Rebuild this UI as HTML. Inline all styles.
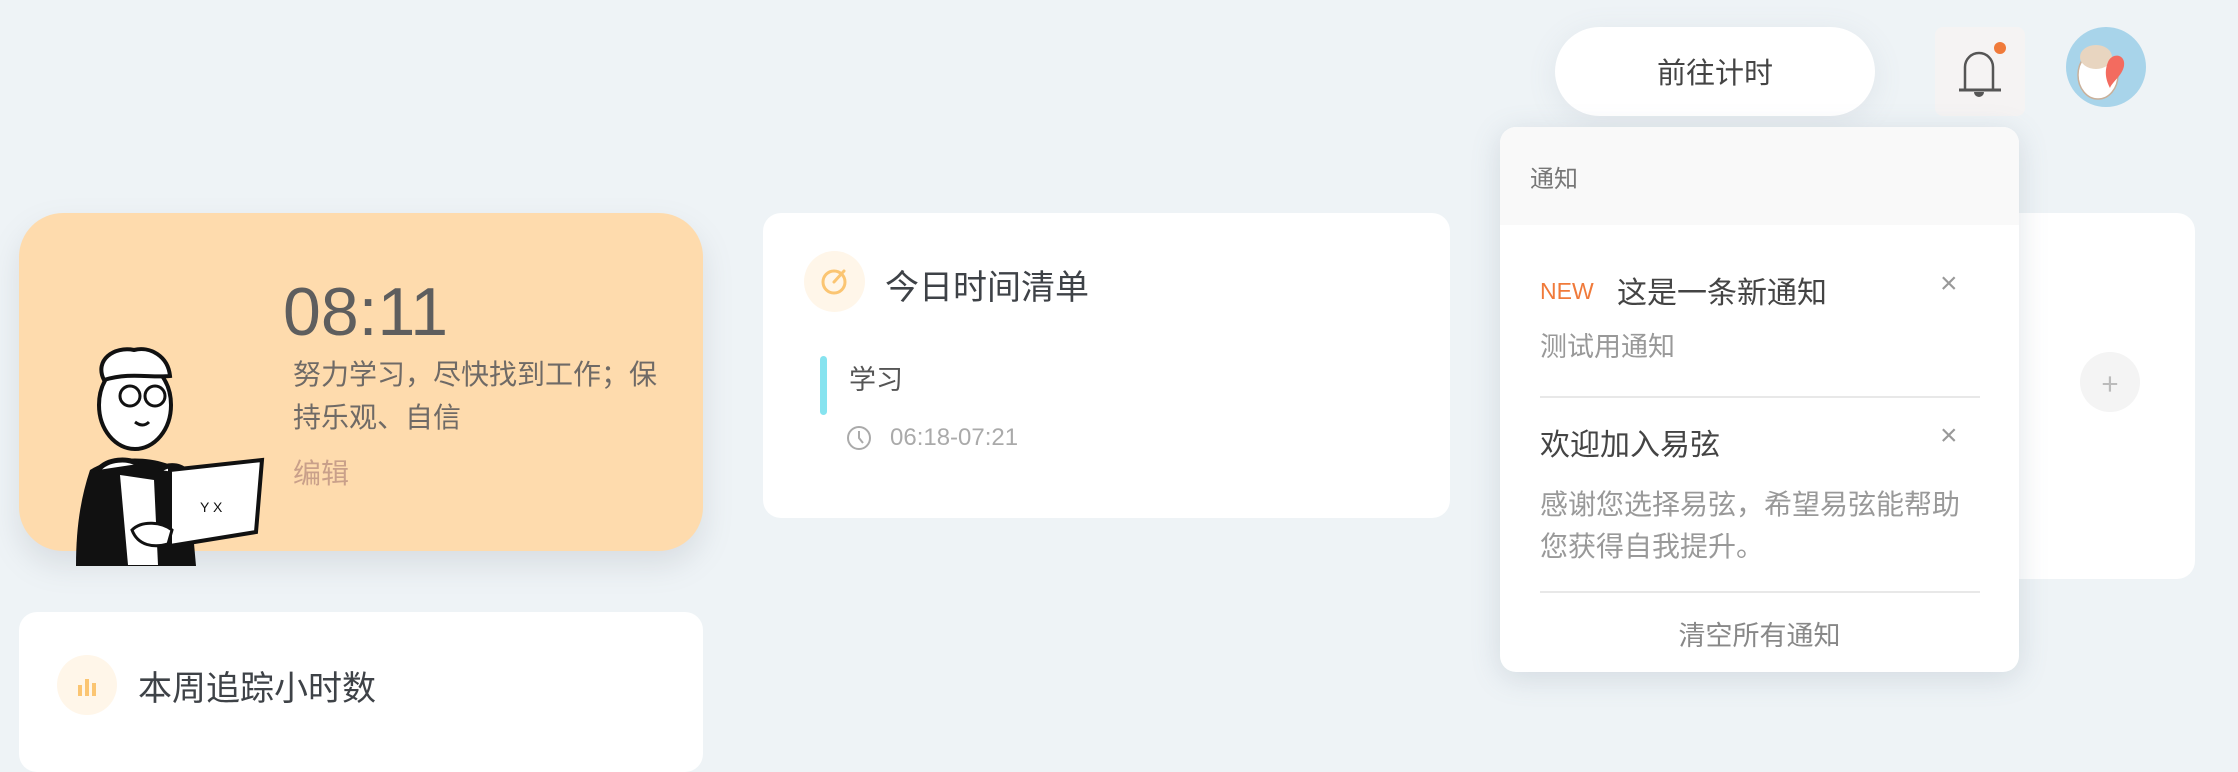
<!DOCTYPE html>
<html><head><meta charset="utf-8"><style>
*{margin:0;padding:0;box-sizing:border-box}
body{width:2238px;height:746px;background:#eef3f6;font-family:"Noto Sans CJK SC","Liberation Sans",sans-serif;position:relative;overflow:hidden;color:#333}
.a{position:absolute}
.card{position:absolute;background:#fff;border-radius:18px}
.lat{font-family:"Liberation Sans",sans-serif}
</style></head><body>
<!-- header -->
<div class="a" style="left:1555px;top:27px;width:320px;height:89px;border-radius:45px;background:#fff;box-shadow:0 6px 30px rgba(120,140,160,.12);font-size:29px;color:#444;text-align:center;line-height:89px">前往计时</div>
<div class="a" style="left:1935px;top:27px;width:90px;height:89px;border-radius:8px;background:#f5f3f3">
<svg width="90" height="89" viewBox="0 0 90 89"><path d="M30 62 V40 a14 14 0 0 1 28 0 V62" fill="none" stroke="#555" stroke-width="2.5"/><line x1="24" y1="63" x2="66" y2="63" stroke="#555" stroke-width="3"/><path d="M39 65 a5 5 0 0 0 10 0z" fill="#555"/><circle cx="65" cy="21" r="6" fill="#f07a3a"/></svg></div>
<div class="a" style="left:2066px;top:27px;width:80px;height:80px;border-radius:50%;background:#a8d4ea;overflow:hidden">
<svg width="80" height="80"><ellipse cx="32" cy="48" rx="20" ry="24" fill="#fff" stroke="#c9b09a" stroke-width="1.5"/><ellipse cx="30" cy="30" rx="16" ry="12" fill="#e8d5c0"/><path d="M42 35 c4-10 18-8 16 4 c-2 10-12 16-14 22 c-4-8-6-16-2-26z" fill="#f36b5f"/></svg></div>

<!-- clock card -->
<div class="a" style="left:19px;top:213px;width:684px;height:338px;border-radius:44px;background:#fedbad;box-shadow:0 14px 30px rgba(120,130,140,.18)"></div>
<div class="a lat" style="left:283px;top:272px;font-size:68px;color:#5e5e5e;line-height:80px">08:11</div>
<div class="a" style="left:293px;top:352px;width:380px;font-size:28px;line-height:43px;color:#6f6a66">努力学习，尽快找到工作；保持乐观、自信</div>
<div class="a" style="left:293px;top:452px;font-size:28px;color:#c9a08a">编辑</div>
<svg class="a" style="left:40px;top:330px" width="240" height="240" viewBox="0 0 240 240">
<path d="M50 140 c-10 30-14 60-14 96 h120 l-8-90 c-20-20-70-24-98-6z" fill="#111"/>
<path d="M80 145 l8 90 h30 l-4-85z" fill="#fff"/>
<path d="M58 140 c10-12 30-12 40-6 M120 140 c10-8 24-4 28 4" stroke="#111" stroke-width="5" fill="#fff"/>
<ellipse cx="95" cy="75" rx="36" ry="44" fill="#fff" stroke="#111" stroke-width="4"/>
<path d="M64 50 c-10-20 10-34 30-30 c16-4 34 6 36 26 c-20 2-40-4-66 4z" fill="#fff" stroke="#111" stroke-width="4"/>
<circle cx="90" cy="66" r="10" fill="none" stroke="#111" stroke-width="3"/><circle cx="115" cy="66" r="10" fill="none" stroke="#111" stroke-width="3"/>
<path d="M95 92 q8 6 14 0" stroke="#111" stroke-width="3" fill="none"/>
<path d="M130 140 l92 -10 l-6 72 l-86 14z" fill="#fff" stroke="#111" stroke-width="4"/>
<text x="160" y="182" font-size="14" fill="#111" font-family="Liberation Sans">Y X</text>
<path d="M92 200 c10-10 30-8 40 0 l-4 14 c-14 4-30 2-36-14z" fill="#fff" stroke="#111" stroke-width="3"/>
</svg>

<!-- today card -->
<div class="card" style="left:763px;top:213px;width:687px;height:305px"></div>
<div class="a" style="left:804px;top:251px;width:61px;height:61px;border-radius:50%;background:#fff6e9">
<svg width="61" height="61"><circle cx="30" cy="31" r="11" fill="none" stroke="#fbc572" stroke-width="3"/><line x1="30" y1="31" x2="40" y2="20" stroke="#fbc572" stroke-width="3" stroke-linecap="round"/></svg></div>
<div class="a" style="left:885px;top:260px;font-size:34px;color:#3e4247">今日时间清单</div>
<div class="a" style="left:820px;top:356px;width:7px;height:59px;border-radius:4px;background:#86e3ef"></div>
<div class="a" style="left:849px;top:358px;font-size:27px;color:#555">学习</div>
<svg class="a" style="left:846px;top:425px" width="26" height="26"><circle cx="13" cy="13" r="11" fill="none" stroke="#aaa" stroke-width="2"/><path d="M13 6v7l4 5" fill="none" stroke="#aaa" stroke-width="2"/></svg>
<div class="a lat" style="left:890px;top:424px;font-size:24px;color:#aaa">06:18-07:21</div>

<!-- right card -->
<div class="card" style="left:1520px;top:213px;width:675px;height:366px"></div>
<div class="a" style="left:2080px;top:352px;width:60px;height:60px;border-radius:50%;background:#f4f4f4;color:#bbb;font-size:30px;text-align:center;line-height:60px">+</div>

<!-- bottom card -->
<div class="card" style="left:19px;top:612px;width:684px;height:160px"></div>
<div class="a" style="left:57px;top:655px;width:60px;height:60px;border-radius:50%;background:#fff6e9">
<svg width="60" height="60"><rect x="21" y="30" width="4" height="11" fill="#fbc572"/><rect x="28" y="24" width="4" height="17" fill="#fbc572"/><rect x="35" y="28" width="4" height="13" fill="#fbc572"/></svg></div>
<div class="a" style="left:138px;top:661px;font-size:34px;color:#3e4247">本周追踪小时数</div>

<!-- notification panel -->
<div class="a" style="left:1500px;top:127px;width:519px;height:545px;background:#fff;border-radius:16px;box-shadow:0 6px 30px rgba(100,120,140,.2);overflow:hidden">
<div style="height:98px;background:#f9f9f9"></div>
<div class="a" style="left:30px;top:32px;font-size:24px;color:#777">通知</div>
<div class="a lat" style="left:40px;top:151px;font-size:23px;color:#f07a3a">NEW</div>
<div class="a" style="left:117px;top:141px;font-size:30px;color:#444">这是一条新通知</div>
<div class="a lat" style="left:440px;top:140px;font-size:30px;color:#999">×</div>
<div class="a" style="left:40px;top:198px;font-size:27px;color:#999">测试用通知</div>
<div class="a" style="left:40px;top:269px;width:440px;height:2px;background:#e8e8e8"></div>
<div class="a" style="left:40px;top:293px;font-size:30px;color:#444">欢迎加入易弦</div>
<div class="a lat" style="left:440px;top:292px;font-size:30px;color:#999">×</div>
<div class="a" style="left:40px;top:355px;width:420px;font-size:28px;line-height:42px;color:#999">感谢您选择易弦，希望易弦能帮助您获得自我提升。</div>
<div class="a" style="left:40px;top:464px;width:440px;height:2px;background:#e8e8e8"></div>
<div class="a" style="left:0;top:487px;width:519px;text-align:center;font-size:27px;color:#888">清空所有通知</div>
</div>
</body></html>
